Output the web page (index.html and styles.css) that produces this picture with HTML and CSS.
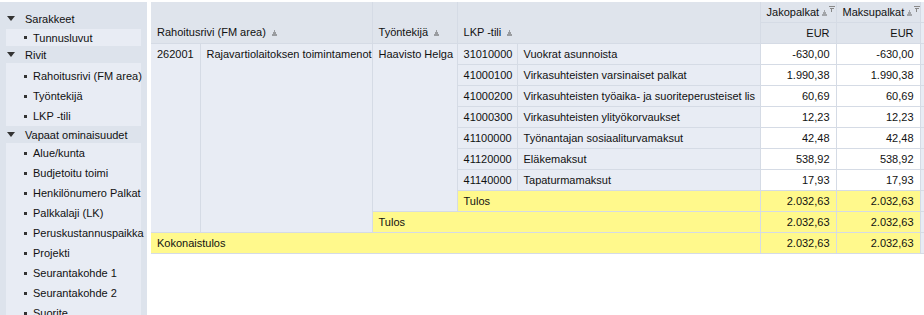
FILE: index.html
```html
<!DOCTYPE html>
<html lang="fi">
<head>
    <meta charset="UTF-8">
    <meta name="viewport" content="width=device-width, initial-scale=1.0">
    <title>Raportti</title>
    <link rel="stylesheet" href="styles.css">
</head>
<body>
    <div class="layout">
        <aside class="panel">
            <div class="group-head"><span class="caret"></span>Sarakkeet</div>
            <ul class="drop drop-first">
                <li>Tunnusluvut</li>
            </ul>
            <div class="group-head"><span class="caret"></span>Rivit</div>
            <ul class="drop drop-rows">
                <li>Rahoitusrivi (FM area)</li>
                <li>Työntekijä</li>
                <li>LKP -tili</li>
            </ul>
            <div class="group-head"><span class="caret"></span>Vapaat ominaisuudet</div>
            <ul class="drop">
                <li>Alue/kunta</li>
                <li>Budjetoitu toimi</li>
                <li>Henkilönumero Palkat</li>
                <li>Palkkalaji (LK)</li>
                <li>Peruskustannuspaikka</li>
                <li>Projekti</li>
                <li>Seurantakohde 1</li>
                <li>Seurantakohde 2</li>
                <li>Suorite</li>
            </ul>
        </aside>

        <main class="grid-wrap">
            <table class="pivot">
                <colgroup>
                    <col style="width: 49px">
                    <col style="width: 172px">
                    <col style="width: 85px">
                    <col style="width: 60px">
                    <col style="width: 243px">
                    <col style="width: 76px">
                    <col style="width: 84px">
                    <col style="width: 40px">
                </colgroup>
                <thead>
                    <tr>
                        <th class="dim" colspan="2" rowspan="2">Rahoitusrivi (FM area) <svg class="sort" width="7" height="6" viewBox="0 0 7 6"><path d="M3 1h1M2 3h3M1 5h5" stroke="#555" stroke-width="1"/></svg></th>
                        <th class="dim" rowspan="2">Työntekijä <svg class="sort" width="7" height="6" viewBox="0 0 7 6"><path d="M3 1h1M2 3h3M1 5h5" stroke="#555" stroke-width="1"/></svg></th>
                        <th class="dim" colspan="2" rowspan="2">LKP -tili <svg class="sort" width="7" height="6" viewBox="0 0 7 6"><path d="M3 1h1M2 3h3M1 5h5" stroke="#555" stroke-width="1"/></svg></th>
                        <th class="measure">Jakopalkat<svg class="sort" width="7" height="6" viewBox="0 0 7 6"><path d="M3 1h1M2 3h3M1 5h5" stroke="#666" stroke-width="1"/></svg><svg class="filter" width="6" height="6" viewBox="0 0 6 6"><path d="M0 0.5h6M1 2.5h4M2.5 3v3" stroke="#888" stroke-width="1"/></svg></th>
                        <th class="measure">Maksupalkat<svg class="sort" width="7" height="6" viewBox="0 0 7 6"><path d="M3 1h1M2 3h3M1 5h5" stroke="#666" stroke-width="1"/></svg><svg class="filter" width="6" height="6" viewBox="0 0 6 6"><path d="M0 0.5h6M1 2.5h4M2.5 3v3" stroke="#888" stroke-width="1"/></svg></th>
                        <th class="cut"></th>
                    </tr>
                    <tr>
                        <th class="unit">EUR</th>
                        <th class="unit">EUR</th>
                        <th class="cut"></th>
                    </tr>
                </thead>
                <tbody>
                    <tr>
                        <td class="lbl" rowspan="9">262001</td>
                        <td class="lbl" rowspan="9">Rajavartiolaitoksen toimintamenot</td>
                        <td class="lbl" rowspan="8">Haavisto Helga</td>
                        <td class="lbl">31010000</td>
                        <td class="lbl">Vuokrat asunnoista</td>
                        <td class="num">-630,00</td>
                        <td class="num">-630,00</td>
                        <td class="cut"></td>
                    </tr>
                    <tr>
                        <td class="lbl">41000100</td>
                        <td class="lbl">Virkasuhteisten varsinaiset palkat</td>
                        <td class="num">1.990,38</td>
                        <td class="num">1.990,38</td>
                        <td class="cut"></td>
                    </tr>
                    <tr>
                        <td class="lbl">41000200</td>
                        <td class="lbl">Virkasuhteisten työaika- ja suoriteperusteiset lis</td>
                        <td class="num">60,69</td>
                        <td class="num">60,69</td>
                        <td class="cut"></td>
                    </tr>
                    <tr>
                        <td class="lbl">41000300</td>
                        <td class="lbl">Virkasuhteisten ylityökorvaukset</td>
                        <td class="num">12,23</td>
                        <td class="num">12,23</td>
                        <td class="cut"></td>
                    </tr>
                    <tr>
                        <td class="lbl">41100000</td>
                        <td class="lbl">Työnantajan sosiaaliturvamaksut</td>
                        <td class="num">42,48</td>
                        <td class="num">42,48</td>
                        <td class="cut"></td>
                    </tr>
                    <tr>
                        <td class="lbl">41120000</td>
                        <td class="lbl">Eläkemaksut</td>
                        <td class="num">538,92</td>
                        <td class="num">538,92</td>
                        <td class="cut"></td>
                    </tr>
                    <tr>
                        <td class="lbl">41140000</td>
                        <td class="lbl">Tapaturmamaksut</td>
                        <td class="num">17,93</td>
                        <td class="num">17,93</td>
                        <td class="cut"></td>
                    </tr>
                    <tr class="total">
                        <td colspan="2">Tulos</td>
                        <td class="num">2.032,63</td>
                        <td class="num">2.032,63</td>
                        <td class="cut"></td>
                    </tr>
                    <tr class="total">
                        <td colspan="3">Tulos</td>
                        <td class="num">2.032,63</td>
                        <td class="num">2.032,63</td>
                        <td class="cut"></td>
                    </tr>
                    <tr class="total">
                        <td colspan="5">Kokonaistulos</td>
                        <td class="num">2.032,63</td>
                        <td class="num">2.032,63</td>
                        <td class="cut"></td>
                    </tr>
                </tbody>
            </table>
        </main>
    </div>
</body>
</html>
```

FILE: styles.css
```css
body {
    font-family: "Liberation Sans", Arial, sans-serif;
    font-size: 11px;
    color: #111;
    margin: 0;
    padding: 2px 0 0 0;
    background-color: #fff;
    overflow: hidden;
}

.layout {
    display: flex;
    gap: 4px;
    height: 313px;
}

/* left field list */
.panel {
    width: 147px;
    flex-shrink: 0;
    background-color: #dde3ec;
    padding-top: 8px;
    overflow: hidden;
}

.group-head {
    height: 17px;
    display: flex;
    align-items: center;
    white-space: nowrap;
}

.caret {
    width: 0;
    height: 0;
    border-left: 4px solid transparent;
    border-right: 4px solid transparent;
    border-top: 5px solid #333;
    margin: 0 10px 0 7px;
}

.drop {
    list-style: none;
    margin: 0 6px;
    padding: 0;
    background-color: #e8ecf4;
}

.drop li {
    height: 20px;
    white-space: nowrap;
    display: flex;
    align-items: center;
}

.drop li::before {
    content: "";
    flex-shrink: 0;
    width: 3px;
    height: 3px;
    background-color: #333;
    margin: 0 6px 0 18px;
}

.drop-first {
    margin-top: 2px;
}

.drop-first li {
    height: 17px;
}

.drop-rows {
    padding-top: 3px;
}

/* pivot table */
.grid-wrap {
    flex: 1;
    overflow: hidden;
}

.pivot {
    table-layout: fixed;
    border-collapse: collapse;
    width: 809px;
}

.pivot th,
.pivot td {
    height: 20px;
    padding: 0 6px;
    border: 1px solid #d5dbe5;
    white-space: nowrap;
    overflow: hidden;
    text-align: left;
    font-weight: normal;
}

.pivot th {
    background-color: #dfe4ec;
}

.pivot th:first-child,
.pivot td:first-child {
    border-left: none;
}

.pivot thead tr:first-child th {
    border-top: none;
}

.pivot th.dim {
    vertical-align: bottom;
    padding-bottom: 5px;
}

.pivot th.measure {
    padding-left: 6px;
    padding-right: 2px;
}

.pivot th.unit {
    text-align: right;
}

.sort {
    margin-left: 2px;
    vertical-align: 0;
}

.filter {
    margin-left: 1px;
    vertical-align: 4px;
}

.pivot td {
    vertical-align: middle;
}

.pivot td.lbl {
    background-color: #e8ecf4;
    vertical-align: top;
    padding-top: 4px;
    height: 16px;
}

.pivot td.num {
    background-color: #fff;
    text-align: right;
}

.pivot .cut {
    background-color: #e8ecf4;
}

.pivot tr.total td {
    background-color: #fff98c;
}

.pivot tr.total td.cut {
    background-color: #e8ecf4;
}
```
